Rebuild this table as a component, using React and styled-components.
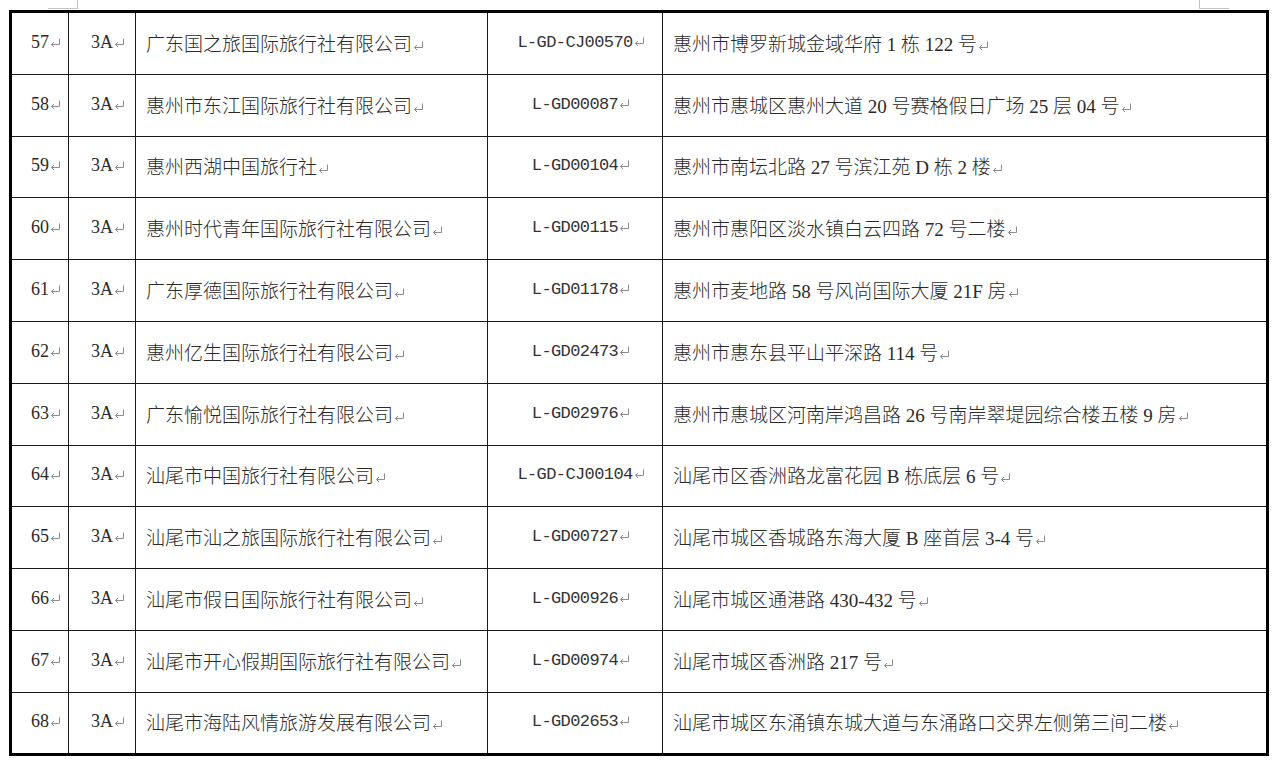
import React from "react";
import styled, { createGlobalStyle } from "styled-components";

const GlobalStyle = createGlobalStyle`
  * {
    box-sizing: border-box;
  }
  html, body {
    margin: 0;
    padding: 0;
    background: #ffffff;
  }
`;

const Page = styled.div`
  width: 1280px;
  height: 766px;
  overflow: hidden;
  background: #ffffff;
  padding-left: 9px;
`;

const MarksBar = styled.div`
  display: flex;
  height: 10px;
  padding-left: 39px;
  padding-right: 51px;
`;

const CornerMark = styled.div`
  width: 30px;
  height: 9px;
  border-bottom: 1px solid #c4c4c4;
  ${({ side }) =>
    side === "left"
      ? "border-right: 1px solid #c4c4c4;"
      : "border-left: 1px solid #c4c4c4; margin-left: auto;"}
`;

const Table = styled.table`
  width: 1260px;
  table-layout: fixed;
  border-collapse: separate;
  border-spacing: 0;
  border: 3px solid #000000;
  color: #2a2a2a;
`;

const Row = styled.tr`
  height: 61.8px;

  &:last-child {
    height: 60px;
  }

  &:last-child td {
    border-bottom: none;
  }
`;

const fonts = {
  code: '"Liberation Mono", "DejaVu Sans Mono", monospace',
  num: '"Liberation Serif", serif',
  text: '"Liberation Serif", "Noto Sans CJK SC", serif',
};

const sizes = { code: "17px", num: "18px", text: "19px" };

const Cell = styled.td`
  padding: 0 0 2px ${({ align }) => (align === "left" ? "10px" : "0")};
  text-align: ${({ align }) => align || "center"};
  vertical-align: middle;
  border-right: 1px solid #1a1a1a;
  border-bottom: 1px solid #1a1a1a;
  white-space: nowrap;
  font-family: ${({ kind = "text" }) => fonts[kind]};
  font-size: ${({ kind = "text" }) => sizes[kind]};
  letter-spacing: ${({ kind }) => (kind === "code" ? "-0.6px" : "0")};
  font-weight: ${({ kind }) => (kind === "code" || kind === "num" ? 400 : 300)};
  color: ${({ kind }) => (kind === "code" ? "#333333" : "#2a2a2a")};

  &:last-child {
    border-right: none;
  }
`;

const Mark = styled.svg`
  display: inline-block;
  width: 11px;
  height: 9px;
  margin-left: 1px;
  margin-right: ${({ centered }) => (centered ? "-12px" : "0")};
  vertical-align: 1px;
`;

const ReturnMark = ({ centered }) => (
  <Mark centered={centered} viewBox="0 0 11 9">
    <path d="M9.5 0.5 V6.5 H1.5" fill="none" stroke="#8c8c8c" strokeWidth="1" />
    <path d="M4 4 L1.5 6.5 L4 9" fill="none" stroke="#8c8c8c" strokeWidth="1" />
  </Mark>
);

const rows = [
  ["57", "广东国之旅国际旅行社有限公司", "L-GD-CJ00570", "惠州市博罗新城金域华府 1 栋 122 号"],
  ["58", "惠州市东江国际旅行社有限公司", "L-GD00087", "惠州市惠城区惠州大道 20 号赛格假日广场 25 层 04 号"],
  ["59", "惠州西湖中国旅行社", "L-GD00104", "惠州市南坛北路 27 号滨江苑 D 栋 2 楼"],
  ["60", "惠州时代青年国际旅行社有限公司", "L-GD00115", "惠州市惠阳区淡水镇白云四路 72 号二楼"],
  ["61", "广东厚德国际旅行社有限公司", "L-GD01178", "惠州市麦地路 58 号风尚国际大厦 21F 房"],
  ["62", "惠州亿生国际旅行社有限公司", "L-GD02473", "惠州市惠东县平山平深路 114 号"],
  ["63", "广东愉悦国际旅行社有限公司", "L-GD02976", "惠州市惠城区河南岸鸿昌路 26 号南岸翠堤园综合楼五楼 9 房"],
  ["64", "汕尾市中国旅行社有限公司", "L-GD-CJ00104", "汕尾市区香洲路龙富花园 B 栋底层 6 号"],
  ["65", "汕尾市汕之旅国际旅行社有限公司", "L-GD00727", "汕尾市城区香城路东海大厦 B 座首层 3-4 号"],
  ["66", "汕尾市假日国际旅行社有限公司", "L-GD00926", "汕尾市城区通港路 430-432 号"],
  ["67", "汕尾市开心假期国际旅行社有限公司", "L-GD00974", "汕尾市城区香洲路 217 号"],
  ["68", "汕尾市海陆风情旅游发展有限公司", "L-GD02653", "汕尾市城区东涌镇东城大道与东涌路口交界左侧第三间二楼"],
];

export default function App() {
  return (
    <Page>
      <GlobalStyle />
      <MarksBar>
        <CornerMark side="left" />
        <CornerMark side="right" />
      </MarksBar>
      <Table>
        <colgroup>
          <col style={{ width: 57 }} />
          <col style={{ width: 67 }} />
          <col style={{ width: 352 }} />
          <col style={{ width: 175 }} />
          <col style={{ width: 603 }} />
        </colgroup>
        <tbody>
          {rows.map(([no, name, code, addr]) => (
            <Row key={no}>
              <Cell kind="num">
                {no}
                <ReturnMark centered />
              </Cell>
              <Cell kind="num">
                3A
                <ReturnMark centered />
              </Cell>
              <Cell align="left">
                {name}
                <ReturnMark />
              </Cell>
              <Cell kind="code">
                {code}
                <ReturnMark centered />
              </Cell>
              <Cell align="left">
                {addr}
                <ReturnMark />
              </Cell>
            </Row>
          ))}
        </tbody>
      </Table>
    </Page>
  );
}
